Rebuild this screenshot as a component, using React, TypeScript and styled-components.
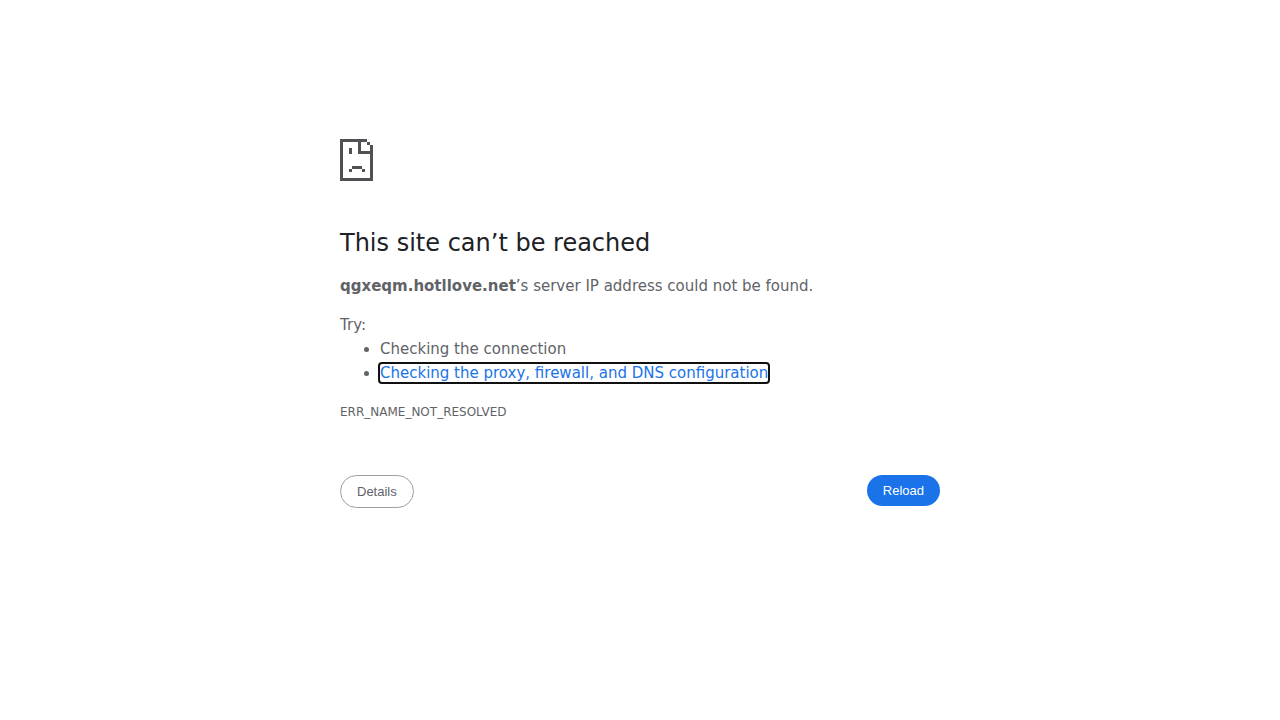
import React from 'react';
import styled, { createGlobalStyle } from 'styled-components';

const GlobalStyle = createGlobalStyle`
  body {
    margin: 0;
    background: #fff;
    color: #5f6368;
    font-family: "DejaVu Sans", sans-serif;
    font-size: 15px;
    line-height: 24px;
  }
`;

const Page = styled.main`
  box-sizing: border-box;
  width: 100%;
  max-width: 600px;
  margin: 0 auto;
  padding-top: 139px;
`;

const PageIcon = styled.svg`
  display: block;
  width: 33px;
  height: 42px;
  margin: 0 0 47px;
  fill: #505154;
  shape-rendering: crispEdges;
`;

const Title = styled.h1`
  margin: 0 0 16px;
  color: #202124;
  font-size: 24px;
  font-weight: 500;
  line-height: 30px;
`;

const Summary = styled.p`
  margin: 0;
`;

const Suggestions = styled.section`
  margin-top: 15px;
`;

const SuggestionList = styled.ul`
  margin: 0;
  padding-left: 40px;
`;

const HelpLink = styled.a`
  color: #1a73e8;
  text-decoration: none;
  border-radius: 2px;
  outline: 2px solid #101010;
`;

const ErrorCode = styled.p`
  margin: 15px 0 0;
  font-size: 12px;
`;

const Actions = styled.div`
  display: flex;
  align-items: flex-start;
  justify-content: space-between;
  margin-top: 51px;
`;

const Button = styled.button<{ $primary?: boolean }>`
  padding: 8px 16px;
  border: ${(p) => (p.$primary ? '0' : '1px solid #9aa0a6')};
  border-radius: 20px;
  background: ${(p) => (p.$primary ? '#1a73e8' : '#fff')};
  color: ${(p) => (p.$primary ? '#fff' : '#5f6368')};
  font-family: "Liberation Sans", sans-serif;
  font-size: 13px;
  line-height: 15px;
  cursor: pointer;
`;

export default function App() {
  return (
    <>
      <GlobalStyle />
      <Page>
        <PageIcon viewBox="0 0 33 42" aria-hidden="true">
          <path d="M0 0h27v3H3v36h27V15H18V3h3v9h12v30H0z" />
          <path d="M27 3h3v3h-3zM30 6h3v6h-3zM9 9h3v6H9zM12 27h10v3H12zM9 30h3v3H9zM22 30h3v3h-3z" />
        </PageIcon>
        <Title>This site can’t be reached</Title>
        <Summary>
          <strong>qgxeqm.hotllove.net</strong>’s server IP address could not be found.
        </Summary>
        <Suggestions>
          <div>Try:</div>
          <SuggestionList>
            <li>Checking the connection</li>
            <li>
              <HelpLink href="#buttons">Checking the proxy, firewall, and DNS configuration</HelpLink>
            </li>
          </SuggestionList>
        </Suggestions>
        <ErrorCode>ERR_NAME_NOT_RESOLVED</ErrorCode>
        <Actions id="buttons">
          <Button type="button">Details</Button>
          <Button type="button" $primary>Reload</Button>
        </Actions>
      </Page>
    </>
  );
}
